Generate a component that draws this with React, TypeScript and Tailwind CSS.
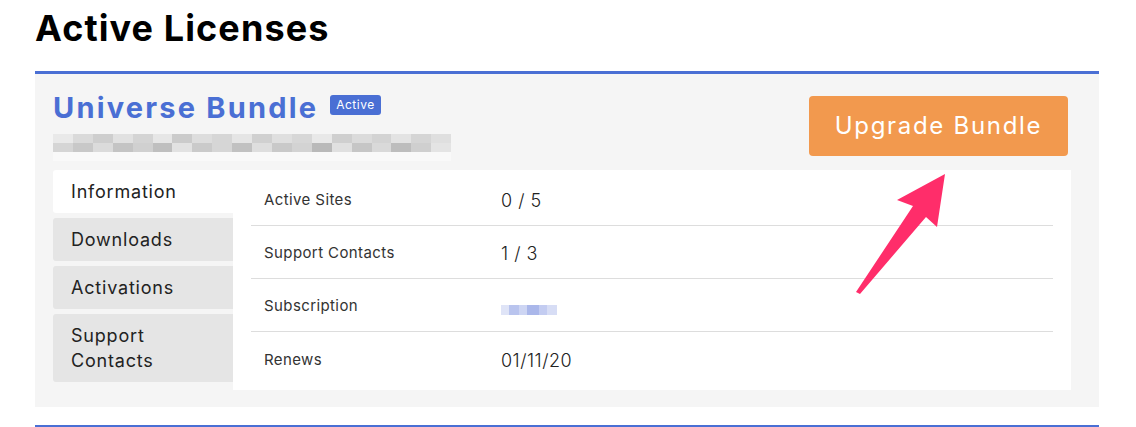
import React, { useState } from 'react';

const tabs = ['Information', 'Downloads', 'Activations', 'Support Contacts'];

const rows: { label: string; value: React.ReactNode }[] = [
  { label: 'Active Sites', value: '0 / 5' },
  { label: 'Support Contacts', value: '1 / 3' },
  {
    label: 'Subscription',
    value: (
      <span className="inline-flex h-[10px] w-[56px] translate-y-[2px]">
        <span className="w-[8px] bg-[#dfe4f7]" />
        <span className="w-[10px] bg-[#b9c4ee]" />
        <span className="w-[8px] bg-[#cdd5f3]" />
        <span className="w-[12px] bg-[#aab7ea]" />
        <span className="w-[8px] bg-[#c3ccf1]" />
        <span className="w-[10px] bg-[#d7ddf5]" />
      </span>
    ),
  },
  { label: 'Renews', value: '01/11/20' },
];

const blurShades = ['#e4e4e4', '#cfcfcf', '#bdbdbd', '#d9d9d9', '#c6c6c6', '#e0e0e0', '#b9b9b9', '#d3d3d3', '#c9c9c9', '#dedede', '#c1c1c1', '#d6d6d6', '#cacaca', '#e2e2e2', '#bfbfbf', '#d0d0d0', '#c4c4c4', '#dbdbdb', '#c8c8c8', '#d5d5d5'];

const Blurred: React.FC = () => (
  <div className="mt-[11px] flex h-[27px] w-[398px] flex-col">
    <div className="flex h-[9px]">
      {blurShades.map((c, i) => (
        <span key={i} className="h-full flex-1 opacity-70" style={{ backgroundColor: c }} />
      ))}
    </div>
    <div className="flex h-[9px]">
      {blurShades.slice().reverse().map((c, i) => (
        <span key={i} className="h-full flex-1" style={{ backgroundColor: c }} />
      ))}
    </div>
    <div className="h-[9px] bg-[#f9f9f9]" />
  </div>
);

export default function App() {
  const [active, setActive] = useState(0);

  return (
    <div className="min-h-screen bg-white pl-[35px] pr-[37px] pt-[5px] text-[#222]" style={{ fontFamily: 'Inter, "Liberation Sans", sans-serif' }}>
      <h1 className="text-[36px] font-bold leading-[46px] tracking-[1.1px] text-black">Active Licenses</h1>

      <div className="relative mt-[20px] border-t-[3px] border-[#4a6fd4] bg-[#f5f5f5] pb-[17px] pl-[18px] pr-[28px]">
        <div className="flex items-start justify-between pt-[19px]">
          <div>
            <div className="flex items-start gap-[12px]">
              <h2 className="text-[29px] font-bold leading-[30px] tracking-[2.2px] text-[#4a6fd4]">Universe Bundle</h2>
              <span className="mt-[2px] rounded-[3px] bg-[#4a6fd4] px-[6px] text-[12px] leading-[20px] tracking-[0.5px] text-white">Active</span>
            </div>
            <Blurred />
          </div>
          <button className="mr-[3px] mt-[3px] h-[60px] w-[259px] rounded-[4px] bg-[#f2994e] text-[24px] font-normal tracking-[1.7px] text-white">
            Upgrade Bundle
          </button>
        </div>

        <div className="mt-[9px] flex">
          <div className="flex w-[180px] flex-col gap-[5px]">
            {tabs.map((t, i) => (
              <button
                key={t}
                onClick={() => setActive(i)}
                className={`rounded-l-[3px] px-[18px] py-[9px] text-left text-[18px] leading-[25px] tracking-[0.8px] ${i === active ? 'bg-white' : 'bg-[#e5e5e5]'}`}
              >
                {t === 'Support Contacts' ? (
                  <>
                    Support
                    <br />
                    Contacts
                  </>
                ) : (
                  t
                )}
              </button>
            ))}
          </div>

          <div className="flex-1 bg-white px-[18px] pb-[5px] pt-[3px]">
            {rows.map((r, i) => (
              <div key={r.label} className={`flex h-[53px] items-center pt-[3px] ${i < rows.length - 1 ? 'border-b border-[#dddddd]' : ''}`}>
                <span className="w-[250px] pl-[13px] text-[15px] tracking-[0.4px] text-[#333]">{r.label}</span>
                <span className="text-[18px] font-light tracking-[0.5px] text-[#222]">{r.value}</span>
              </div>
            ))}
          </div>
        </div>

        <svg className="pointer-events-none absolute left-0 top-0" width="1064" height="340" viewBox="0 0 1064 340">
          <polygon
            points="910,100 862,126 878,132 821,218 825,220 891,143 902,153"
            fill="#ff2d6a"
          />
        </svg>
      </div>

      <div className="mt-[18px] h-[2px] bg-[#4a6fd4]" />
    </div>
  );
}
